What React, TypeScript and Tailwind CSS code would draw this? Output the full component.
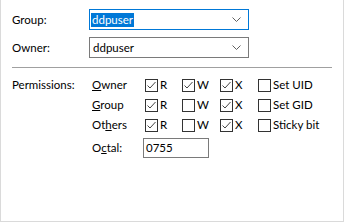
import React from "react";

function Chevron() {
  return (
    <svg width="9" height="5" viewBox="0 0 9 5" className="shrink-0">
      <polyline points="0.5,0.5 4.5,4.5 8.5,0.5" fill="none" stroke="#606060" strokeWidth="1" />
    </svg>
  );
}

function Combo({ value, focused }: { value: string; focused?: boolean }) {
  return (
    <div
      className={`w-[160px] h-[21px] border flex items-center pl-px pr-[7px] ${
        focused ? "border-[#0078d7]" : "border-[#7a7a7a]"
      }`}
    >
      <span className={`flex-1 leading-[14px] ${focused ? "" : "pl-[2px]"}`}>
        {focused ? (
          <span className="bg-[#0078d7] text-white px-px inline-block h-[14px]">{value}</span>
        ) : (
          value
        )}
      </span>
      <Chevron />
    </div>
  );
}

function Check({ checked, label, w }: { checked: boolean; label: string; w: string }) {
  return (
    <div className={`flex items-center gap-[2px] ${w}`}>
      <span className="w-[13px] h-[13px] border border-[#333] bg-white flex items-center justify-center shrink-0">
        {checked && (
          <svg width="11" height="11" viewBox="0 0 11 11">
            <polyline points="1.5,5.5 4,8 9.5,2" fill="none" stroke="#444" strokeWidth="1" />
          </svg>
        )}
      </span>
      <span>{label}</span>
    </div>
  );
}

const ROWS = [
  { pre: "", key: "O", post: "wner", bits: [true, true, true, false], special: "Set UID" },
  { pre: "", key: "G", post: "roup", bits: [true, false, true, false], special: "Set GID" },
  { pre: "Ot", key: "h", post: "ers", bits: [true, false, true, false], special: "Sticky bit" },
];

export default function App() {
  return (
    <div className="w-[346px] h-[223px] bg-white text-black text-[11.5px] font-['Lato',sans-serif]">
      <div className="w-[344px] h-[222px] border-x border-b border-[#dadada] pl-[11px] pt-[9px]">
        <div className="flex items-center">
          <span className="w-[77px]">Group:</span>
          <Combo value="ddpuser" focused />
        </div>
        <div className="flex items-center mt-[7px]">
          <span className="w-[77px]">Owner:</span>
          <Combo value="ddpuser" />
        </div>
        <div className="mt-[9px] w-[320px] h-px bg-[#a0a0a0]" />
        <div className="flex mt-[7px]">
          <div className="w-[80px] h-[20px] flex items-center">Permissions:</div>
          <div className="flex flex-col">
            {ROWS.map((r) => (
              <div key={r.post} className="h-[20px] flex items-center">
                <span className="w-[53px]">
                  {r.pre}
                  <span className="underline">{r.key}</span>
                  {r.post}
                </span>
                <Check checked={r.bits[0]} label="R" w="w-[37px]" />
                <Check checked={r.bits[1]} label="W" w="w-[38px]" />
                <Check checked={r.bits[2]} label="X" w="w-[38px]" />
                <Check checked={r.bits[3]} label={r.special} w="w-[70px]" />
              </div>
            ))}
            <div className="h-[20px] mt-[3px] flex items-center">
              <span className="w-[51px]">
                O<span className="underline">c</span>tal:
              </span>
              <div className="w-[66px] h-[20px] border border-[#7a7a7a] flex items-center pl-[2px]">0755</div>
            </div>
          </div>
        </div>
      </div>
    </div>
  );
}
